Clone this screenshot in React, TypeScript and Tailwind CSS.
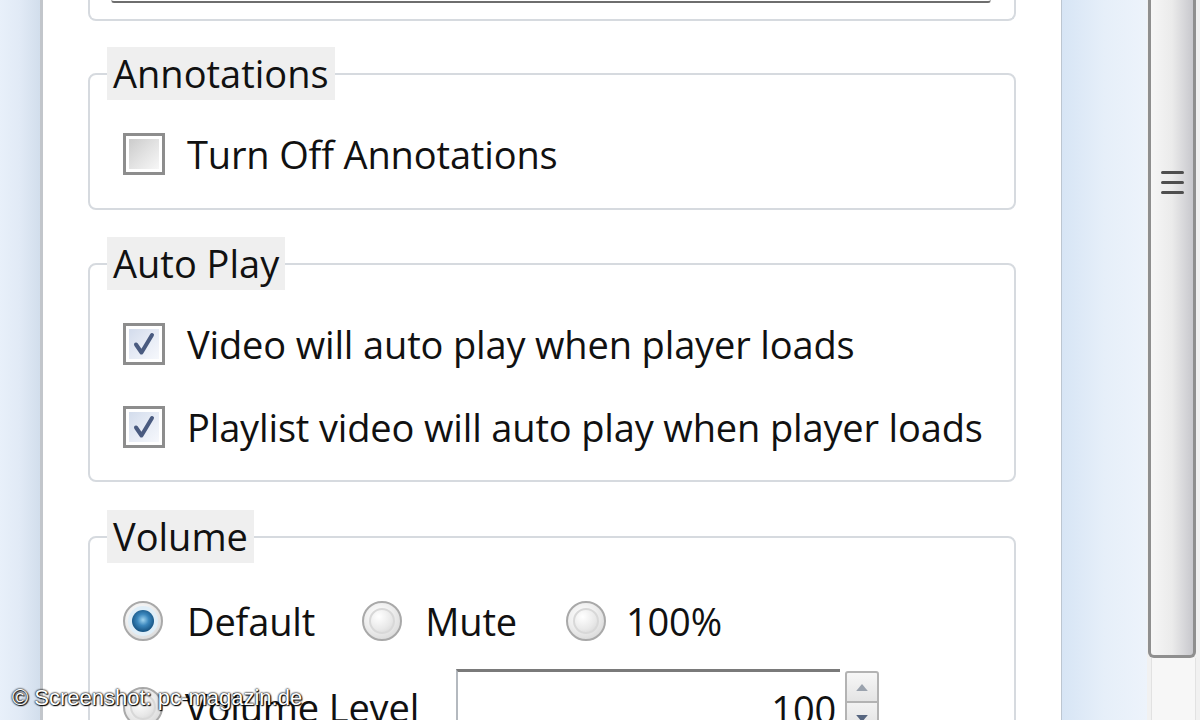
import type { ReactNode } from "react";

const FONT = "font-['Open_Sans','Noto_Sans',sans-serif]";

function Check({ checked = false }: { checked?: boolean }) {
  return (
    <span className="flex h-[42px] w-[42px] shrink-0 border-[3px] border-[#8d8d8d] bg-white p-[3px]">
      <span
        className={
          checked
            ? "flex h-full w-full items-center justify-center bg-gradient-to-br from-[#d3dcec] via-[#e6ebf5] to-[#f6f8fc]"
            : "flex h-full w-full bg-gradient-to-br from-[#cbcbcb] via-[#e2e2e2] to-[#f7f7f7]"
        }
      >
        {checked && (
          <svg viewBox="0 0 30 30" className="h-[30px] w-[30px]">
            <path
              d="M7 15.5 L12.5 23.5 L23 6"
              fill="none"
              stroke="#4a5b80"
              strokeWidth="4"
              strokeLinecap="round"
              strokeLinejoin="round"
            />
          </svg>
        )}
      </span>
    </span>
  );
}

function Radio({ on = false }: { on?: boolean }) {
  return (
    <span className="flex h-[40px] w-[40px] shrink-0 items-center justify-center rounded-full border-2 border-[#a9a9a9] bg-[radial-gradient(circle_at_40%_35%,#ffffff_0%,#eeeeee_45%,#cfcfcf_100%)]">
      {on ? (
        <span className="flex h-[30px] w-[30px] items-center justify-center rounded-full bg-[#dfeef8]">
          <span className="h-[22px] w-[22px] rounded-full bg-[radial-gradient(circle_at_50%_45%,#9fd4f0_0%,#3b87bd_35%,#14507f_75%,#0d3a5e_100%)]" />
        </span>
      ) : (
        <span className="h-[26px] w-[26px] rounded-full border-2 border-[#d8d8d8] bg-[radial-gradient(circle_at_35%_30%,#ffffff_0%,#e9e9e9_60%,#d4d4d4_100%)]" />
      )}
    </span>
  );
}

function Group({ title, children, className }: { title: string; children: ReactNode; className: string }) {
  return (
    <fieldset className={`w-[928px] rounded-[8px] border-2 border-[#d6dadf] ${className}`}>
      <legend className="ml-[17px] h-[53px] bg-[#efefef] px-[6px] text-[38px] leading-[53px]">
        {title}
      </legend>
      {children}
    </fieldset>
  );
}

function Row({ children, className = "" }: { children: ReactNode; className?: string }) {
  return (
    <div className={`flex h-[42px] items-center gap-[22px] pl-[33px] text-[38px] leading-[42px] tracking-[-0.15px] ${className}`}>
      {children}
    </div>
  );
}

export default function App() {
  return (
    <div className={`relative flex h-[720px] w-[1200px] overflow-hidden bg-white text-[#111111] ${FONT}`}>
      {/* desktop edge */}
      <div className="w-[40px] shrink-0 bg-gradient-to-r from-[#e8f0fa] via-[#e1eaf6] to-[#d2deec]" />
      <div className="w-[3px] shrink-0 bg-[#c2c6cb]" />

      {/* dialog body */}
      <main className="w-[1018px] shrink-0 bg-white pl-[45px]">
        <div className="h-[21px] w-[928px] rounded-b-[8px] border-2 border-t-0 border-[#d6dadf]">
          <div className="ml-[21px] h-[3px] w-[880px] rounded-b-[3px] border-x border-b-2 border-[#6e6e6e] border-x-[#b5b5b5]" />
        </div>

        <Group title="Annotations" className="mt-[26px] pt-[33px] pb-[33px]">
          <Row>
            <Check />
            <span>Turn Off Annotations</span>
          </Row>
        </Group>

        <Group title="Auto Play" className="mt-[27px] pt-[33px] pb-[32px]">
          <div className="flex flex-col gap-[41px]">
            <Row>
              <Check checked />
              <span>Video will auto play when player loads</span>
            </Row>
            <Row>
              <Check checked />
              <span>Playlist video will auto play when player loads</span>
            </Row>
          </div>
        </Group>

        <Group title="Volume" className="mt-[28px] pt-[37px] pb-[20px]">
          <Row className="h-[40px]">
            <div className="flex items-center gap-[24px]">
              <Radio on />
              <span>Default</span>
            </div>
            <div className="ml-[25px] flex items-center gap-[23px]">
              <Radio />
              <span>Mute</span>
            </div>
            <div className="ml-[27px] flex items-center gap-[20px]">
              <Radio />
              <span>100%</span>
            </div>
          </Row>
          <Row className="mt-[27px] h-[76px]">
            <Radio />
            <span>Volume Level</span>
            <div className="ml-[15px] flex h-[76px] items-start">
              <div className="flex h-full w-[384px] items-center justify-end border-t-[3px] border-l-2 border-[#b4b9bf] border-t-[#7a7a7a] pr-[4px]">
                100
              </div>
              <div className="ml-[5px] flex w-[34px] flex-col pt-[2px]">
                <div className="flex h-[32px] items-center justify-center rounded-t-[3px] border-2 border-[#b3b3b3] bg-gradient-to-b from-[#f7f7f7] to-[#e4e4e4]">
                  <svg viewBox="0 0 10 6" className="h-[7px] w-[12px]">
                    <path d="M0 6 L5 0 L10 6 Z" fill="#9aa2ad" />
                  </svg>
                </div>
                <div className="flex h-[32px] items-center justify-center border-2 border-t-0 border-[#b3b3b3] bg-gradient-to-b from-[#f2f2f2] to-[#e0e0e0]">
                  <svg viewBox="0 0 10 6" className="h-[7px] w-[12px]">
                    <path d="M0 0 L10 0 L5 6 Z" fill="#56657f" />
                  </svg>
                </div>
              </div>
            </div>
          </Row>
        </Group>
      </main>

      {/* window frame on the right */}
      <div className="w-px shrink-0 bg-[#bcc6d1]" />
      <div className="w-[85px] shrink-0 bg-gradient-to-r from-[#d7e5f5] via-[#e6eff9] to-[#edf3fb]" />

      {/* scrollbar */}
      <div className="flex w-[53px] shrink-0 flex-col bg-[#f1f1f1]">
        <div className="mr-[4px] ml-px flex h-[658px] flex-col items-center gap-[7px] rounded-b-[6px] border-[3px] border-t-0 border-[#8f8f8f] bg-gradient-to-r from-[#f6f6f6] via-[#ebebeb] to-[#c8c8cd] pt-[171px]">
          <span className="h-[3px] w-[23px] rounded-full bg-[#4f4f4f]" />
          <span className="h-[3px] w-[23px] rounded-full bg-[#4f4f4f]" />
          <span className="h-[3px] w-[23px] rounded-full bg-[#4f4f4f]" />
        </div>
        <div className="mr-[4px] ml-[4px] flex-1 border-x border-[#e2e2e2] bg-[#f7f7f7]" />
      </div>

      {/* watermark */}
      <div className="absolute top-[684px] left-[12px] font-['Liberation_Sans',Arial,sans-serif] text-[22px] leading-[28px] text-white [text-shadow:0_0_2px_#000,0_0_2px_#000,1px_1px_1px_#000]">
        © Screenshot: pc-magazin.de
      </div>
    </div>
  );
}
